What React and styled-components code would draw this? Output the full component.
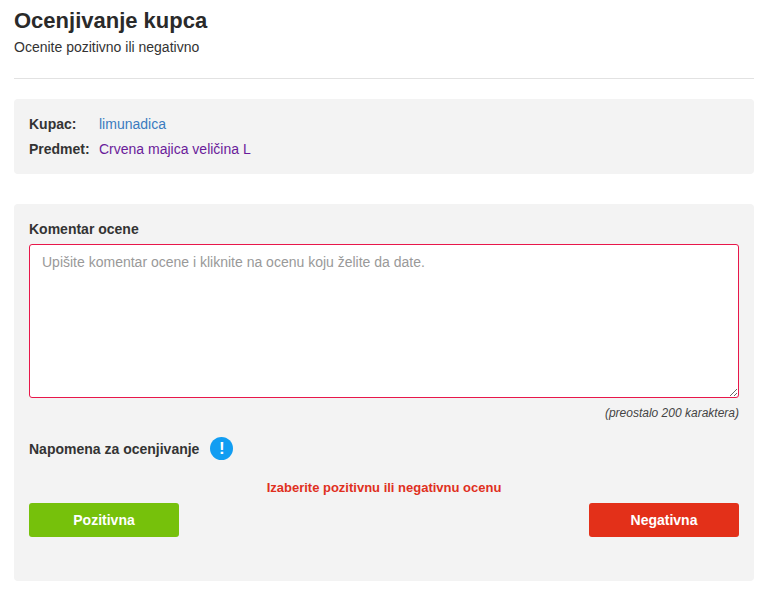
import styled, { createGlobalStyle } from 'styled-components';

const Global = createGlobalStyle`
  body { margin: 0; font-family: "Liberation Sans", Arial, sans-serif; color: #222; background: #fff; }
`;

const Page = styled.div`
  padding: 8px 12px 14px 14px;
`;
const Title = styled.h1`
  margin: 0;
  font-size: 22px;
  font-weight: 700;
  color: #2a2a2a;
  line-height: 26px;
`;
const Sub = styled.div`
  font-size: 14px;
  margin-top: 5px;
  color: #333;
`;
const Rule = styled.hr`
  border: 0;
  border-top: 1px solid #e2e2e2;
  margin: 23px 0 20px;
`;
const Box = styled.div`
  background: #f3f3f3;
  border-radius: 4px;
  padding: ${({ $pad }) => $pad};
  margin-bottom: ${({ $mb }) => $mb || '0'};
`;
const InfoRow = styled.div`
  display: flex;
  font-size: 14px;
  line-height: 25px;
`;
const InfoKey = styled.span`
  width: 70px;
  font-weight: 700;
  color: #333;
`;
const InfoVal = styled.span`
  color: ${({ $c }) => $c};
`;
const Label = styled.div`
  font-size: 14px;
  font-weight: 700;
  color: #333;
  margin-bottom: 7px;
`;
const Area = styled.textarea`
  display: block;
  box-sizing: border-box;
  width: 100%;
  height: 154px;
  border: 1px solid #e8174a;
  border-radius: 3px;
  background: #fff;
  padding: 9px 12px;
  font-family: "Liberation Sans", Arial, sans-serif;
  font-size: 14px;
  resize: vertical;
  &::placeholder { color: #999; }
`;
const Counter = styled.div`
  text-align: right;
  font-size: 12px;
  font-style: italic;
  color: #444;
  margin-top: 8px;
`;
const NoteRow = styled.div`
  display: flex;
  align-items: center;
  gap: 11px;
  margin-top: 17px;
  font-size: 14px;
  font-weight: 700;
  color: #333;
`;
const Bang = styled.span`
  width: 23px;
  height: 23px;
  border-radius: 50%;
  background: #119df2;
  color: #fff;
  display: inline-flex;
  align-items: center;
  justify-content: center;
  font-size: 17px;
  font-weight: 700;
`;
const Err = styled.div`
  text-align: center;
  color: #e0301e;
  font-size: 13px;
  font-weight: 700;
  margin-top: 20px;
`;
const Buttons = styled.div`
  display: flex;
  justify-content: space-between;
  margin-top: 8px;
`;
const Btn = styled.button`
  width: 150px;
  height: 34px;
  border: 0;
  border-radius: 3px;
  background: ${({ $bg }) => $bg};
  color: #fff;
  font-family: "Liberation Sans", Arial, sans-serif;
  font-size: 14px;
  font-weight: 700;
`;

export default function App() {
  return (
    <Page>
      <Global />
      <Title>Ocenjivanje kupca</Title>
      <Sub>Ocenite pozitivno ili negativno</Sub>
      <Rule />
      <Box $pad="13px 15px 12px" $mb="30px">
        <InfoRow><InfoKey>Kupac:</InfoKey><InfoVal $c="#3a7bbf">limunadica</InfoVal></InfoRow>
        <InfoRow><InfoKey>Predmet:</InfoKey><InfoVal $c="#6a1b9a">Crvena majica veličina L</InfoVal></InfoRow>
      </Box>
      <Box $pad="17px 15px 44px">
        <Label>Komentar ocene</Label>
        <Area placeholder="Upišite komentar ocene i kliknite na ocenu koju želite da date." />
        <Counter>(preostalo 200 karaktera)</Counter>
        <NoteRow>Napomena za ocenjivanje <Bang>!</Bang></NoteRow>
        <Err>Izaberite pozitivnu ili negativnu ocenu</Err>
        <Buttons>
          <Btn $bg="#76c10b">Pozitivna</Btn>
          <Btn $bg="#e33019">Negativna</Btn>
        </Buttons>
      </Box>
    </Page>
  );
}
